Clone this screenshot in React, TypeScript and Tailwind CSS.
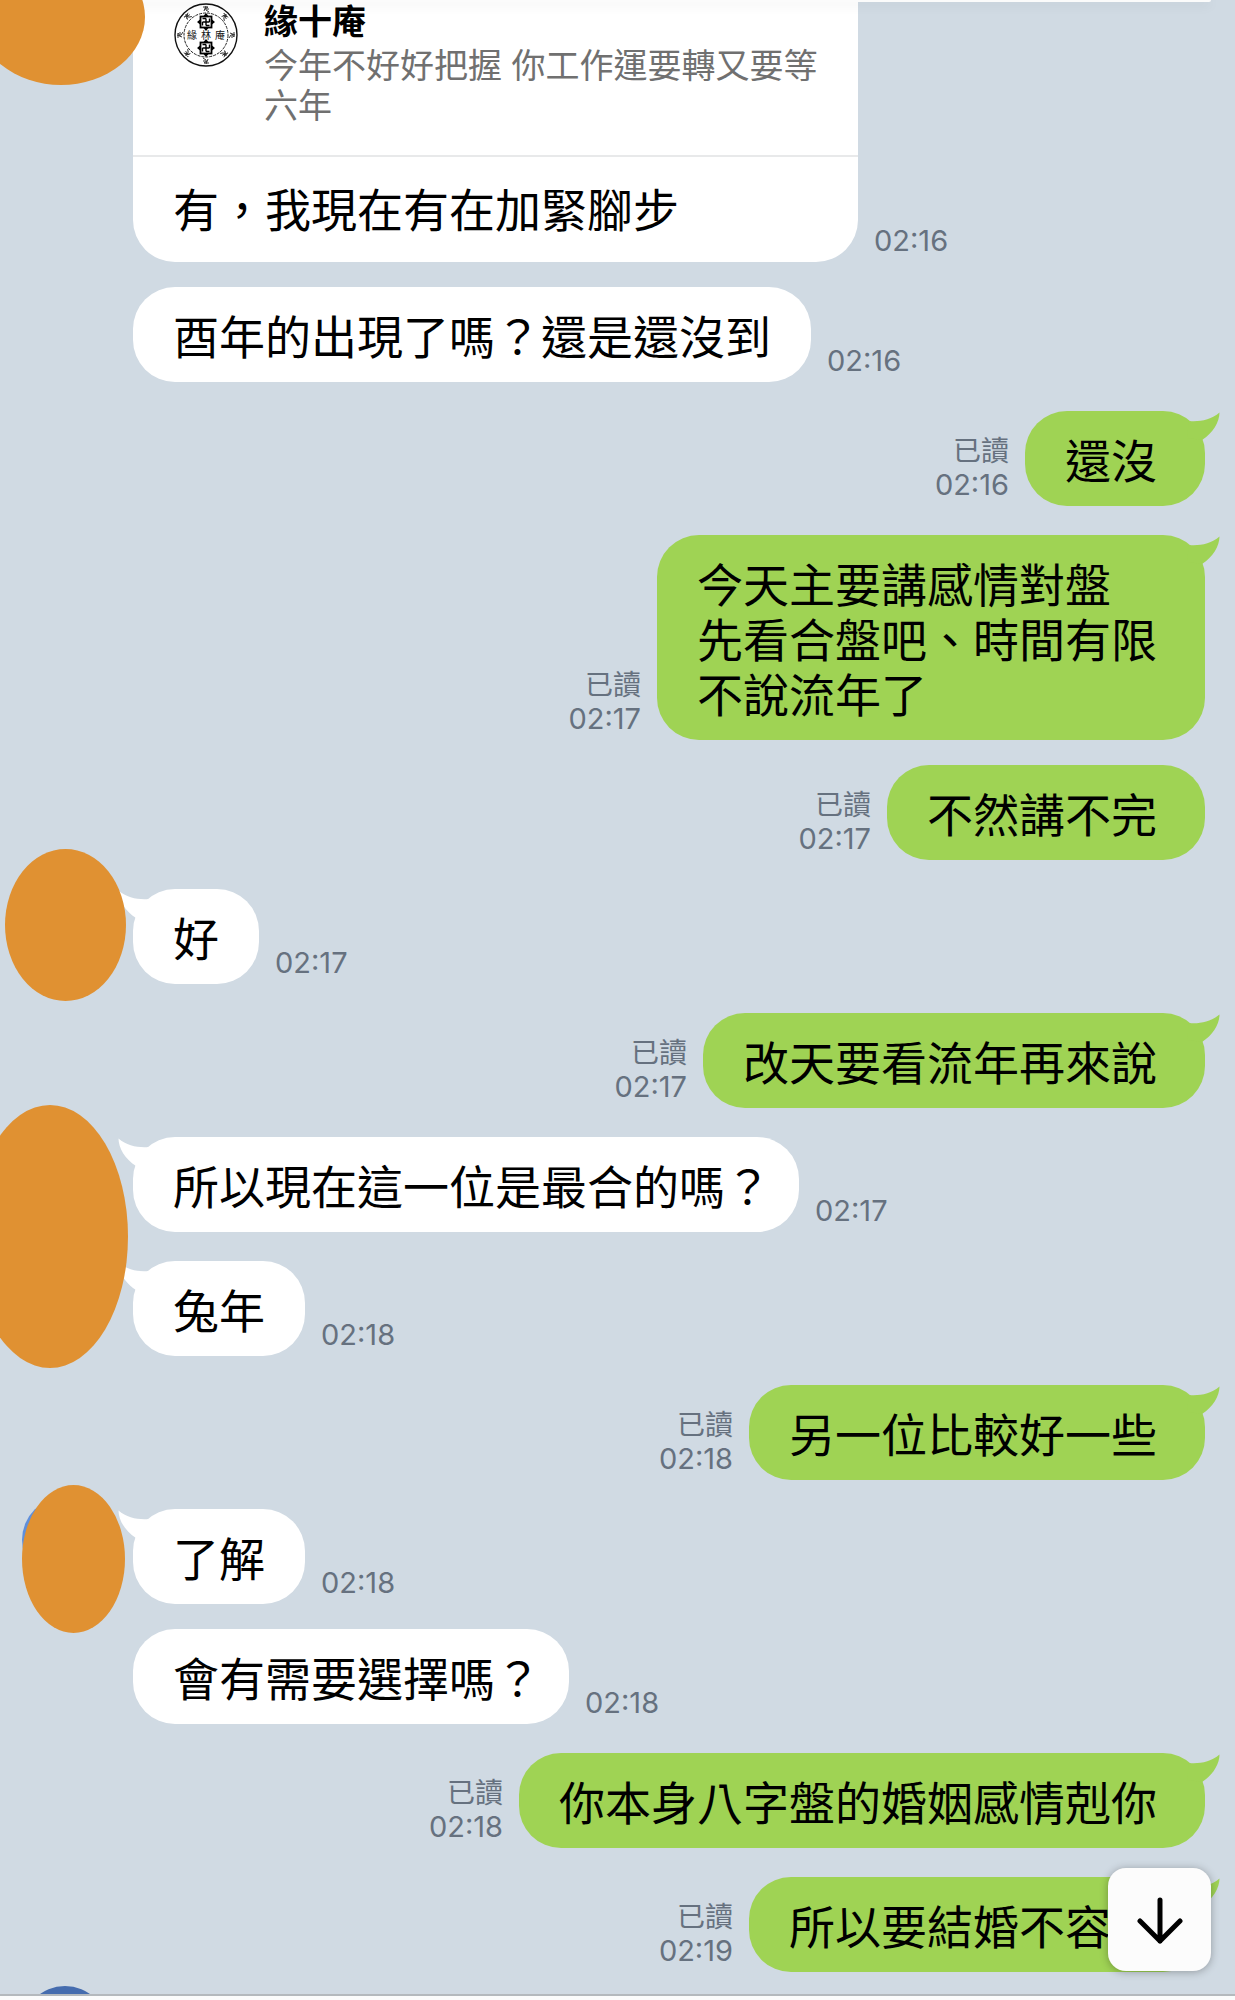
import React from 'react'

type Message = {
  from: 'me' | 'them'
  lines: string[]
  time: string
  tail?: boolean
  avatar?: React.ReactNode
}

const Cover = ({ className }: { className: string }) => (
  <span className={`absolute z-10 rounded-[50%] bg-[#e09132] ${className}`} />
)

const messages: Message[] = [
  { from: 'them', lines: ['酉年的出現了嗎？還是還沒到'], time: '02:16' },
  { from: 'me', lines: ['還沒'], time: '02:16', tail: true },
  { from: 'me', lines: ['今天主要講感情對盤', '先看合盤吧、時間有限', '不說流年了'], time: '02:17', tail: true },
  { from: 'me', lines: ['不然講不完'], time: '02:17' },
  {
    from: 'them',
    lines: ['好'],
    time: '02:17',
    tail: true,
    avatar: <Cover className="-top-9 left-[5px] h-[152px] w-[121px]" />,
  },
  { from: 'me', lines: ['改天要看流年再來說'], time: '02:17', tail: true },
  {
    from: 'them',
    lines: ['所以現在這一位是最合的嗎？'],
    time: '02:17',
    tail: true,
    avatar: <Cover className="-top-7 -left-7 h-[263px] w-[156px]" />,
  },
  { from: 'them', lines: ['兔年'], time: '02:18', tail: true },
  { from: 'me', lines: ['另一位比較好一些'], time: '02:18', tail: true },
  {
    from: 'them',
    lines: ['了解'],
    time: '02:18',
    tail: true,
    avatar: (
      <>
        <span className="absolute -top-2 left-[22px] size-[86px] rounded-full bg-[#5f8fdb]" />
        <Cover className="-top-5 left-[22px] h-[148px] w-[103px]" />
      </>
    ),
  },
  { from: 'them', lines: ['會有需要選擇嗎？'], time: '02:18' },
  { from: 'me', lines: ['你本身八字盤的婚姻感情剋你'], time: '02:18', tail: true },
  { from: 'me', lines: ['所以要結婚不容易'], time: '02:19', tail: true },
]

function Tail({ mine }: { mine: boolean }) {
  return (
    <svg
      viewBox="0 0 36 32"
      className={`absolute top-0 h-8 w-9 ${mine ? '-right-4 fill-[#9fd354]' : '-left-4 -scale-x-100 fill-white'}`}
      aria-hidden="true"
    >
      <path d="M4 10 C14 11 26 9 34.5 1.5 C34.5 11 28 22 17 29 L2 27 Z" />
    </svg>
  )
}

function Time({ mine, time }: { mine: boolean; time: string }) {
  return (
    <div className={`pb-1 text-[29px] leading-[34px] text-[#66717f] ${mine ? 'text-right' : ''}`}>
      {mine && <p className="text-[28px]">已讀</p>}
      <time className="block">{time}</time>
    </div>
  )
}

function Row({ message }: { message: Message }) {
  const mine = message.from === 'me'
  const question = message.lines[message.lines.length - 1].endsWith('？')

  return (
    <li
      className={`relative flex items-end gap-4 ${message.tail ? 'pt-1' : ''} ${
        mine ? 'flex-row-reverse pr-[30px]' : 'pl-[133px]'
      }`}
    >
      {message.avatar}
      <div
        className={`relative rounded-[42px] pt-[23px] pb-[17px] text-[46px] leading-[55px] text-black ${
          mine ? 'bg-[#9fd354] pr-12 pl-10' : question ? 'bg-white pr-7 pl-10' : 'bg-white px-10'
        }`}
      >
        {message.tail && <Tail mine={mine} />}
        {message.lines.map((line) => (
          <p key={line} className="whitespace-nowrap">
            {line}
          </p>
        ))}
      </div>
      <Time mine={mine} time={message.time} />
    </li>
  )
}

function Emblem({ y }: { y: number }) {
  return (
    <g transform={`translate(32 ${y})`}>
      <path d="M-9 0L-6 -2.5V2.5ZM9 0L6 -2.5V2.5ZM0 -9L-2.5 -6H2.5ZM0 9L-2.5 6H2.5Z" fill="#000" />
      <rect x="-5.5" y="-5.5" width="11" height="11" fill="#fff" stroke="#000" strokeWidth="1.8" />
      <path d="M0 -3.5V3.5M-3.5 0H3.5M0 -3.5H-3.5M0 3.5H3.5M-3.5 0V3.5M3.5 0V-3.5" fill="none" stroke="#000" strokeWidth="1.4" />
    </g>
  )
}

function Seal() {
  return (
    <svg viewBox="0 0 64 64" className="mt-[3px] size-16 shrink-0" role="img" aria-label="緣十庵">
      <circle cx="32" cy="32" r="31" fill="#fff" stroke="#111" strokeWidth="1.4" />
      <circle cx="32" cy="32" r="22" fill="none" stroke="#222" strokeWidth="1" strokeDasharray="3 1" />
      <Emblem y={19} />
      <Emblem y={45} />
      <g fill="#111" fontSize="10" textAnchor="middle">
        <text x="18" y="36">緣</text>
        <text x="32" y="36">林</text>
        <text x="46" y="36">庵</text>
      </g>
      <g fill="none" stroke="#333" strokeWidth="1">
        {[0, 45, 90, 135, 180, 225, 270, 315].map((angle) => (
          <path key={angle} d="M-3 -2H2L-1 0H3M-2 2L0 -3M0 1L3 3" transform={`rotate(${angle} 32 32) translate(32 6)`} />
        ))}
      </g>
    </svg>
  )
}

export default function App() {
  return (
    <main className="overflow-hidden bg-[#fbfcfc] font-['Inter','Noto_Sans_CJK_TC',sans-serif]">
      <section className="relative border-b-2 border-[#b4b9bd] bg-[#d0dae3] pb-[22px]">
        <div className="absolute inset-x-0 top-0 z-10 mr-6 h-[2px] rounded-br-full bg-[#fbfbfb] shadow-[0_2px_12px_rgba(0,0,0,0.16)]" />

        <ul className="flex flex-col gap-[25px]">
          <li className="relative flex items-end gap-4 pl-[133px]">
            <Cover className="-top-[51px] -left-[23px] h-[136px] w-[168px]" />
            <div className="w-[725px] rounded-b-[42px] bg-white">
              <blockquote className="flex gap-[26px] border-b-2 border-[#e8e9ea] pr-6 pb-[29px] pl-[41px]">
                <Seal />
                <div className="pt-[2px] text-[34px] leading-10">
                  <p className="font-bold text-black">緣十庵</p>
                  <p className="mt-1 text-[#707070]">今年不好好把握 你工作運要轉又要等六年</p>
                </div>
              </blockquote>
              <p className="px-10 pt-[26px] pb-6 text-[46px] leading-[55px] text-black">有，我現在有在加緊腳步</p>
            </div>
            <Time mine={false} time="02:16" />
          </li>

          {messages.map((message) => (
            <Row key={message.lines[0]} message={message} />
          ))}
        </ul>

        {/* next sender's picture, only its top edge is scrolled into view */}
        <div className="absolute bottom-0 left-[22px] h-2 w-[86px] overflow-hidden">
          <span className="block size-[86px] rounded-full bg-[#456cae]" />
        </div>

        <button
          type="button"
          aria-label="捲動到最新訊息"
          className="absolute right-6 bottom-[23px] z-20 flex size-[103px] items-center justify-center rounded-[18px] bg-[#fcfcfc] shadow-[0_1px_8px_rgba(0,0,0,0.3)]"
        >
          <svg
            viewBox="0 0 48 48"
            className="size-12 fill-none stroke-black stroke-[5]"
            strokeLinecap="round"
            strokeLinejoin="round"
          >
            <path d="M24 4V45M4 25L24 45L44 25" />
          </svg>
        </button>
      </section>
      <div className="h-1" />
    </main>
  )
}
